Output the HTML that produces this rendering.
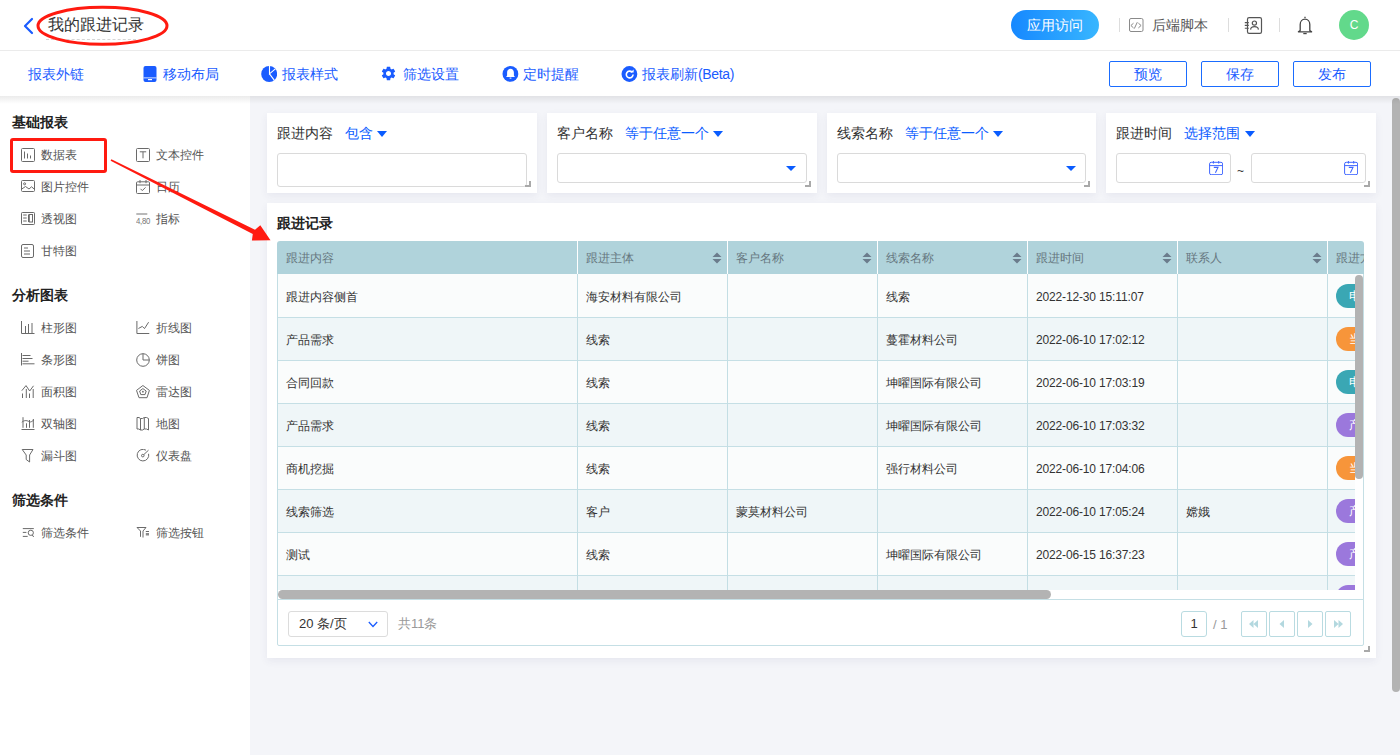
<!DOCTYPE html>
<html><head><meta charset="utf-8">
<style>
*{box-sizing:border-box;margin:0;padding:0}
html,body{width:1400px;height:755px;overflow:hidden}
body{background:#f4f5f9;font-family:"Liberation Sans",sans-serif;color:#333;position:relative}
.a{position:absolute}
.hdr{left:0;top:0;width:1400px;height:51px;background:#fff;border-bottom:1px solid #ebebeb}
.tb{left:0;top:51px;width:1400px;height:45px;background:#fff}
.tbi{top:66px;font-size:14px;line-height:16px;color:#1a5cff;white-space:nowrap}
.btn{top:61px;width:78px;height:26px;border:1px solid #1a6cff;border-radius:2px;font-size:14px;line-height:24px;text-align:center;color:#1a5cff}
.side{left:0;top:96px;width:250px;height:659px;background:#fff}
.sh{font-size:14px;font-weight:bold;color:#222;line-height:16px;left:12px}
.si{font-size:12px;color:#555;line-height:14px;white-space:nowrap}
.ic{width:13px;height:13px}
.card{background:#fff;box-shadow:0 3px 8px rgba(50,50,110,.07)}
.lbl{font-size:14px;line-height:16px;color:#333;white-space:nowrap}
.op{font-size:14px;line-height:16px;color:#0a5cff;white-space:nowrap}
.tri{width:0;height:0;border-left:5px solid transparent;border-right:5px solid transparent;border-top:6px solid #0a5cff}
.inp{border:1px solid #dadada;border-radius:3px;background:#fff}
.tri2{width:0;height:0;border-left:5px solid transparent;border-right:5px solid transparent;border-top:5px solid #0a5cff}
.hnd{width:6px;height:6px;border-right:2px solid #a9a9a9;border-bottom:2px solid #a9a9a9}
.th{top:241px;height:33px;background:#b0d3db;font-size:12px;line-height:33px;color:#76878d;padding-left:9px;white-space:nowrap;overflow:hidden}
.row{left:277px;width:1078px;height:43px;border-bottom:1px solid #c3dee4}
.td{font-size:12px;line-height:14px;color:#333;white-space:nowrap}
.vl{width:1px;background:#c3dee4}
.sort{width:10px;height:12px}
.tag{width:40px;height:24px;border-radius:12px;color:#fff;font-size:12px;line-height:24px;padding-left:13px}
.pb{top:611px;width:26px;height:26px;border:1px solid #b9dbe1;border-radius:2px}
</style></head><body>

<!-- header -->
<div class="a hdr"></div>
<svg class="a" style="left:22px;top:17px" width="14" height="18" viewBox="0 0 14 18"><path d="M10 2 L3 9 L10 16" fill="none" stroke="#1a5cff" stroke-width="2.2" stroke-linecap="round" stroke-linejoin="round"/></svg>
<div class="a" style="left:48px;top:16px;font-size:16px;line-height:18px;color:#333;white-space:nowrap">我的跟进记录</div>
<div class="a" style="left:46px;top:39px;width:90px;border-top:1px dashed #d6d6d6"></div>
<svg class="a" style="left:35px;top:4px" width="136" height="44" viewBox="0 0 136 44"><ellipse cx="67.5" cy="21.8" rx="64.5" ry="18.5" fill="none" stroke="#ff1a10" stroke-width="3"/></svg>

<div class="a" style="left:1011px;top:10px;width:88px;height:30px;border-radius:15px;background:linear-gradient(90deg,#1688ff,#38b6ff);color:#fff;font-size:14px;line-height:30px;text-align:center">应用访问</div>
<div class="a" style="left:1119px;top:18px;width:1px;height:14px;background:#ddd"></div>
<svg class="a" style="left:1129px;top:18px" width="15" height="14" viewBox="0 0 15 14"><rect x="0.5" y="0.5" width="13.5" height="13" rx="1.5" fill="none" stroke="#8a8a8a" stroke-width="1"/><path d="M4.5 5.2 L1.9 7.5 L4.5 9.9 M9.4 5.2 L12.1 7.5 L9.4 9.9 M8.3 4.2 L5.3 10.6" fill="none" stroke="#8a8a8a" stroke-width="1"/></svg>
<div class="a" style="left:1152px;top:17px;font-size:14px;line-height:16px;color:#555;white-space:nowrap">后端脚本</div>
<div class="a" style="left:1228px;top:18px;width:1px;height:14px;background:#ddd"></div>
<svg class="a" style="left:1244px;top:17px" width="19" height="17" viewBox="0 0 19 17"><rect x="3.5" y="0.6" width="14" height="15.8" rx="1.6" fill="none" stroke="#555" stroke-width="1.2"/><path d="M0.8 5.6h4M0.8 8.4h4M0.8 11.3h4" stroke="#555" stroke-width="1.1"/><circle cx="10.4" cy="6.1" r="2.1" fill="none" stroke="#555" stroke-width="1.2"/><path d="M6.6 12.6 C6.8 8.6 14.2 8.6 14.4 12.6" fill="none" stroke="#555" stroke-width="1.2"/></svg>
<div class="a" style="left:1279px;top:18px;width:1px;height:14px;background:#ddd"></div>
<svg class="a" style="left:1297px;top:16px" width="16" height="19" viewBox="0 0 16 19"><path d="M8 0.8v1.2" stroke="#444" stroke-width="1.3"/><path d="M3.2 14.5 V8.5 C3.2 5.3 5.3 3.2 8 3.2 C10.7 3.2 12.8 5.3 12.8 8.5 V14.5 L14.6 15.8 H1.4 Z" fill="none" stroke="#444" stroke-width="1.3" stroke-linejoin="round"/><path d="M6.3 17.6 H9.7" stroke="#444" stroke-width="1.2"/></svg>
<div class="a" style="left:1339px;top:10px;width:30px;height:30px;border-radius:15px;background:#62d98b;color:#fff;font-size:12px;line-height:31px;text-align:center">C</div>

<!-- toolbar -->
<div class="a tb"></div>
<div class="a tbi" style="left:28px">报表外链</div>
<svg class="a" style="left:143px;top:66px" width="14" height="16" viewBox="0 0 14 16"><rect x="0.5" y="0" width="13" height="16" rx="2" fill="#1a5cff"/><rect x="5" y="13" width="4" height="1.2" fill="#fff"/><rect x="0.5" y="11.5" width="13" height="0.8" fill="#fff"/></svg>
<div class="a tbi" style="left:163px">移动布局</div>
<svg class="a" style="left:261px;top:66px" width="16" height="16" viewBox="0 0 16 16"><circle cx="8.2" cy="8" r="8" fill="#1a5cff"/><path d="M8.5 0V7.9L14.6 2.6M8.5 7.9L13.4 14.4" fill="none" stroke="#fff" stroke-width="1.1"/></svg>
<div class="a tbi" style="left:282px">报表样式</div>
<svg class="a" style="left:380px;top:65px" width="17" height="17" viewBox="0 0 24 24"><path fill="#1a5cff" d="M19.14 12.94c.04-.3.06-.61.06-.94 0-.32-.02-.64-.07-.94l2.03-1.58a.49.49 0 0 0 .12-.61l-1.92-3.32a.488.488 0 0 0-.59-.22l-2.39.96c-.5-.38-1.03-.7-1.62-.94l-.36-2.54a.484.484 0 0 0-.48-.41h-3.84c-.24 0-.43.17-.47.41l-.36 2.54c-.59.24-1.13.57-1.62.94l-2.39-.96c-.22-.08-.47 0-.59.22L2.74 8.87c-.12.21-.08.47.12.61l2.03 1.58c-.05.3-.09.63-.09.94s.02.64.07.94l-2.03 1.58a.49.49 0 0 0-.12.61l1.92 3.32c.12.22.37.29.59.22l2.39-.96c.5.38 1.03.7 1.62.94l.36 2.54c.05.24.24.41.48.41h3.84c.24 0 .44-.17.47-.41l.36-2.54c.59-.24 1.13-.56 1.62-.94l2.39.96c.22.08.47 0 .59-.22l1.92-3.32c.12-.22.07-.47-.12-.61l-2.01-1.58zM12 15.6c-1.98 0-3.6-1.62-3.6-3.6s1.62-3.6 3.6-3.6 3.6 1.62 3.6 3.6-1.62 3.6-3.6 3.6z"/></svg>
<div class="a tbi" style="left:403px">筛选设置</div>
<svg class="a" style="left:502px;top:66px" width="17" height="16" viewBox="0 0 17 16"><circle cx="8.4" cy="7.9" r="7.9" fill="#1a5cff"/><path d="M4.1 11 H12.9 L11.9 9.6 V6.4 C11.9 4.3 10.3 2.7 8.5 2.7 C6.7 2.7 5.1 4.3 5.1 6.4 V9.6 Z" fill="#fff"/><rect x="7.6" y="11.6" width="1.8" height="1" fill="#fff"/></svg>
<div class="a tbi" style="left:523px">定时提醒</div>
<svg class="a" style="left:621px;top:66px" width="17" height="16" viewBox="0 0 17 16"><circle cx="8.4" cy="8" r="7.9" fill="#1a5cff"/><path d="M11.2 6.2 A3.4 3.4 0 1 0 12.1 8.6" fill="none" stroke="#fff" stroke-width="1.6"/><path d="M9.4 6.6 L12.6 3.6 L12.6 6.6 Z" fill="#fff"/></svg>
<div class="a tbi" style="left:642px">报表刷新<span style="letter-spacing:-0.35px">(Beta)</span></div>

<div class="a btn" style="left:1109px">预览</div>
<div class="a btn" style="left:1201px">保存</div>
<div class="a btn" style="left:1293px">发布</div>

<!-- sidebar -->
<div class="a side"></div>
<div class="a sh" style="top:114px">基础报表</div>
<div class="a sh" style="top:287px">分析图表</div>
<div class="a sh" style="top:492px">筛选条件</div>
<!--SIDE--><svg class="a" style="left:21px;top:148px" width="16" height="14" viewBox="0 0 16 14"><rect x="0.5" y="0.5" width="13" height="13" rx="1" stroke="#6a6a6a" stroke-width="1" fill="none"/><path d="M3.5 3.5v7M6.5 5.5v5M9.5 7.5v3" stroke="#6a6a6a" stroke-width="1" fill="none"/></svg>
<div class="a si" style="left:41px;top:148px">数据表</div>
<svg class="a" style="left:136px;top:148px" width="16" height="14" viewBox="0 0 16 14"><rect x="0.5" y="0.5" width="13" height="13" rx="1" stroke="#6a6a6a" stroke-width="1" fill="none"/><path d="M3.8 3.8h6.4M7 3.8v6.5" stroke="#6a6a6a" stroke-width="1" fill="none"/></svg>
<div class="a si" style="left:156px;top:148px">文本控件</div>
<svg class="a" style="left:21px;top:180px" width="16" height="14" viewBox="0 0 16 14"><rect x="0.5" y="0.5" width="13" height="11" rx="1" stroke="#6a6a6a" stroke-width="1" fill="none"/><circle cx="3.6" cy="3.8" r="1" stroke="#6a6a6a" stroke-width="1" fill="none"/><path d="M0.8 9 L4.5 6.5 L8 9 L10.5 6.8 L13.2 9" stroke="#6a6a6a" stroke-width="1" fill="none"/></svg>
<div class="a si" style="left:41px;top:180px">图片控件</div>
<svg class="a" style="left:136px;top:180px" width="16" height="14" viewBox="0 0 16 14"><rect x="0.5" y="1.8" width="13" height="11.7" rx="1" stroke="#6a6a6a" stroke-width="1" fill="none"/><path d="M0.5 5h13M4 0v3.2M10 0v3.2M4.5 8.8l1.8 1.8 3.2-3.2" stroke="#6a6a6a" stroke-width="1" fill="none"/></svg>
<div class="a si" style="left:156px;top:180px">日历</div>
<svg class="a" style="left:21px;top:212px" width="16" height="14" viewBox="0 0 16 14"><rect x="0.5" y="0.5" width="13" height="12" rx="0.8" stroke="#6a6a6a" stroke-width="1" fill="none"/><path d="M2.2 3h3.5M2.2 6h3.5M2.2 9h3.5M7.5 2.5v7.5" stroke="#6a6a6a" stroke-width="1" fill="none"/><rect x="8.3" y="2.5" width="3.2" height="7.5" stroke="#6a6a6a" stroke-width="1" fill="none"/></svg>
<div class="a si" style="left:41px;top:212px">透视图</div>
<svg class="a" style="left:136px;top:212px" width="16" height="14" viewBox="0 0 16 14"><path d="M0.3 2h11" stroke="#8a8a8a" stroke-width="1.2"/><text x="0" y="11.8" font-size="9.5" fill="#777" font-family="Liberation Sans" transform="scale(0.82,1)" letter-spacing="-0.3">4,80</text></svg>
<div class="a si" style="left:156px;top:212px">指标</div>
<svg class="a" style="left:21px;top:244px" width="16" height="14" viewBox="0 0 16 14"><rect x="0.5" y="0.5" width="12" height="13" rx="1.5" stroke="#6a6a6a" stroke-width="1" fill="none"/><path d="M3 4h4M3 7h6M3 10h6" stroke="#6a6a6a" stroke-width="1" fill="none"/></svg>
<div class="a si" style="left:41px;top:244px">甘特图</div>
<svg class="a" style="left:21px;top:321px" width="16" height="14" viewBox="0 0 16 14"><path d="M0.5 0v12.5h13M4.5 5v7M7.5 3v9M11 2v10" stroke="#6a6a6a" stroke-width="1" fill="none"/></svg>
<div class="a si" style="left:41px;top:321px">柱形图</div>
<svg class="a" style="left:136px;top:321px" width="16" height="14" viewBox="0 0 16 14"><path d="M0.9 0v12.5h12.4M2.4 7.5l3.9-2.1 2.2 2.2 4.1-6.4" stroke="#6a6a6a" stroke-width="1" fill="none"/></svg>
<div class="a si" style="left:156px;top:321px">折线图</div>
<svg class="a" style="left:21px;top:353px" width="16" height="14" viewBox="0 0 16 14"><path d="M0.5 0v12.5M1.5 2.5h8M1.5 5.5h10M1.5 8.2h6M1.5 10.8h12" stroke="#6a6a6a" stroke-width="1" fill="none"/></svg>
<div class="a si" style="left:41px;top:353px">条形图</div>
<svg class="a" style="left:136px;top:353px" width="16" height="14" viewBox="0 0 16 14"><circle cx="7" cy="7" r="6.3" stroke="#6a6a6a" stroke-width="1" fill="none"/><path d="M7 0.7V7H13.3" stroke="#6a6a6a" stroke-width="1" fill="none"/></svg>
<div class="a si" style="left:156px;top:353px">饼图</div>
<svg class="a" style="left:21px;top:385px" width="16" height="14" viewBox="0 0 16 14"><path d="M0.8 5.7L5 0.6 8.7 6 12.5 0.8M1.5 8.5V13M5.3 4V13M8.5 8.5V13M12.2 4V13" stroke="#6a6a6a" stroke-width="1" fill="none"/></svg>
<div class="a si" style="left:41px;top:385px">面积图</div>
<svg class="a" style="left:136px;top:385px" width="16" height="14" viewBox="0 0 16 14"><path d="M6.9 0.5L13.4 5.4 11 12.7H3L0.5 5.4Z" stroke="#6a6a6a" stroke-width="1" fill="none"/><path d="M6.9 3.6L10.2 6 9 9.6H4.8L3.6 6Z" stroke="#6a6a6a" stroke-width="1" fill="none"/><circle cx="6.9" cy="6.7" r="0.9" fill="#6a6a6a"/></svg>
<div class="a si" style="left:156px;top:385px">雷达图</div>
<svg class="a" style="left:21px;top:417px" width="16" height="14" viewBox="0 0 16 14"><path d="M0.5 12.5h13M2 0.2v10.6M5.5 6.3v4.5M8.5 3v7.8M12.3 2v8.8M0.8 5.2C3 3.5 5 2.8 8.5 4.8 10 5.5 11.5 4 13 2.8" stroke="#6a6a6a" stroke-width="1" fill="none"/></svg>
<div class="a si" style="left:41px;top:417px">双轴图</div>
<svg class="a" style="left:136px;top:417px" width="16" height="14" viewBox="0 0 16 14"><path d="M1 0.5H3L4.5 1.5H6.5L8.3 0.5H10.5L12.5 1.5V13L10.5 12H8.3L6.5 13H4.5L2.8 12H1Z M4.5 1.5V13 M8.3 0.5V12" stroke="#6a6a6a" stroke-width="1" fill="none"/></svg>
<div class="a si" style="left:156px;top:417px">地图</div>
<svg class="a" style="left:21px;top:449px" width="16" height="14" viewBox="0 0 16 14"><path d="M1.2 0.5H12L8.6 6V13L5.2 10.5V6Z" stroke="#6a6a6a" stroke-width="1" fill="none"/></svg>
<div class="a si" style="left:41px;top:449px">漏斗图</div>
<svg class="a" style="left:136px;top:449px" width="16" height="14" viewBox="0 0 16 14"><path d="M10 1.2A5.8 5.8 0 1 0 12.6 4.8" stroke="#6a6a6a" stroke-width="1" fill="none"/><circle cx="6.8" cy="6.6" r="1.3" stroke="#6a6a6a" stroke-width="1" fill="none"/><path d="M7.8 5.6L12.5 1.2" stroke="#6a6a6a" stroke-width="1" fill="none"/></svg>
<div class="a si" style="left:156px;top:449px">仪表盘</div>
<svg class="a" style="left:21px;top:526px" width="16" height="14" viewBox="0 0 16 14"><path d="M1.8 2.6h11M1.8 6.4h3.6M1.8 10.4h4.9" stroke="#6a6a6a" stroke-width="1" fill="none"/><circle cx="9.8" cy="6.8" r="2.6" stroke="#6a6a6a" stroke-width="1" fill="none"/><path d="M11.3 9l1.4 2" stroke="#6a6a6a" stroke-width="1" fill="none"/></svg>
<div class="a si" style="left:41px;top:526px">筛选条件</div>
<svg class="a" style="left:136px;top:526px" width="16" height="14" viewBox="0 0 16 14"><path d="M4.5 10.8V5L1 1.5H10L7 5V11.5" stroke="#6a6a6a" stroke-width="1" fill="none"/><path d="M9.8 5.5h3.2" stroke="#6a6a6a" stroke-width="1" fill="none"/><rect x="9.8" y="7" width="3.2" height="2.5" fill="#8a8a8a"/></svg>
<div class="a si" style="left:156px;top:526px">筛选按钮</div><!--/SIDE-->

<!-- annotations -->
<div class="a" style="left:10px;top:138px;width:97px;height:35px;border:3px solid #ff1a10;border-radius:3px"></div>
<svg class="a" style="left:100px;top:150px;z-index:5" width="180" height="100" viewBox="100 150 180 100"><path d="M110.6 160.7 L111.4 159.3 L255.0 229.7 L260.3 225.3 L270.5 240.3 L251.9 240.6 L252.8 234.1 Z" fill="#ff1a10"/></svg>

<!-- toolbar shadow -->
<div class="a" style="left:0;top:96px;width:1400px;height:8px;background:linear-gradient(rgba(0,0,0,.08),rgba(0,0,0,0));z-index:4"></div>

<!-- page scrollbar -->
<div class="a" style="left:1392px;top:98px;width:8px;height:594px;border-radius:4px;background:#b3b3b3"></div>

<!-- filter cards -->
<div class="a card" style="left:267px;top:113px;width:270px;height:80px"></div>
<div class="a card" style="left:547px;top:113px;width:270px;height:80px"></div>
<div class="a card" style="left:827px;top:113px;width:269px;height:80px"></div>
<div class="a card" style="left:1106px;top:113px;width:270px;height:80px"></div>

<div class="a lbl" style="left:277px;top:125px">跟进内容</div>
<div class="a op" style="left:345px;top:125px">包含</div>
<div class="a tri" style="left:377px;top:131px"></div>
<div class="a inp" style="left:277px;top:153px;width:250px;height:34px"></div>
<div class="a hnd" style="left:525px;top:181px"></div>

<div class="a lbl" style="left:557px;top:125px">客户名称</div>
<div class="a op" style="left:625px;top:125px">等于任意一个</div>
<div class="a tri" style="left:713px;top:131px"></div>
<div class="a inp" style="left:557px;top:153px;width:250px;height:30px"></div>
<div class="a tri2" style="left:786px;top:166px"></div>
<div class="a hnd" style="left:805px;top:181px"></div>

<div class="a lbl" style="left:837px;top:125px">线索名称</div>
<div class="a op" style="left:905px;top:125px">等于任意一个</div>
<div class="a tri" style="left:993px;top:131px"></div>
<div class="a inp" style="left:837px;top:153px;width:249px;height:30px"></div>
<div class="a tri2" style="left:1066px;top:166px"></div>
<div class="a hnd" style="left:1084px;top:181px"></div>

<div class="a lbl" style="left:1116px;top:125px">跟进时间</div>
<div class="a op" style="left:1184px;top:125px">选择范围</div>
<div class="a tri" style="left:1245px;top:131px"></div>
<div class="a inp" style="left:1116px;top:153px;width:115px;height:30px"></div>
<svg class="a" style="left:1209px;top:161px" width="14" height="14" viewBox="0 0 14 14"><rect x="0.6" y="1.3" width="13" height="12.4" rx="1.6" fill="none" stroke="#3f66ff" stroke-width="1"/><path d="M0.6 4.6H13.6M4.4 0V2.6M9.7 0V2.6" stroke="#3f66ff" stroke-width="1"/><path d="M4.8 6.4H9L6.4 11.8" fill="none" stroke="#3f66ff" stroke-width="1.1"/></svg>
<div class="a" style="left:1237px;top:164px;font-size:12px;color:#333">~</div>
<div class="a inp" style="left:1251px;top:153px;width:115px;height:30px"></div>
<svg class="a" style="left:1344px;top:161px" width="14" height="14" viewBox="0 0 14 14"><rect x="0.6" y="1.3" width="13" height="12.4" rx="1.6" fill="none" stroke="#3f66ff" stroke-width="1"/><path d="M0.6 4.6H13.6M4.4 0V2.6M9.7 0V2.6" stroke="#3f66ff" stroke-width="1"/><path d="M4.8 6.4H9L6.4 11.8" fill="none" stroke="#3f66ff" stroke-width="1.1"/></svg>
<div class="a hnd" style="left:1364px;top:181px"></div>

<!-- main card -->
<div class="a card" style="left:267px;top:203px;width:1109px;height:455px"></div>
<div class="a" style="left:277px;top:215px;font-size:14px;font-weight:bold;line-height:16px;color:#222">跟进记录</div>

<!--TABLE--><div class="a" style="left:277px;top:274px;width:1078px;height:316px;overflow:hidden;background:#fafcfc">
<div class="a" style="left:0;top:1px;width:1200px;height:43px;background:#fafcfc;border-bottom:1px solid #c5dfe5"></div>
<div class="a td" style="left:9px;top:16px">跟进内容侧首</div>
<div class="a td" style="left:309px;top:16px">海安材料有限公司</div>
<div class="a td" style="left:609px;top:16px">线索</div>
<div class="a td" style="left:759px;top:16px;letter-spacing:-0.15px">2022-12-30 15:11:07</div>
<div class="a tag" style="left:1059px;top:10px;background:#3aa7b4">电话</div>
<div class="a" style="left:0;top:44px;width:1200px;height:43px;background:#eff6f8;border-bottom:1px solid #c5dfe5"></div>
<div class="a td" style="left:9px;top:59px">产品需求</div>
<div class="a td" style="left:309px;top:59px">线索</div>
<div class="a td" style="left:609px;top:59px">蔓霍材料公司</div>
<div class="a td" style="left:759px;top:59px;letter-spacing:-0.15px">2022-06-10 17:02:12</div>
<div class="a tag" style="left:1059px;top:53px;background:#f7953a">当面</div>
<div class="a" style="left:0;top:87px;width:1200px;height:43px;background:#fafcfc;border-bottom:1px solid #c5dfe5"></div>
<div class="a td" style="left:9px;top:102px">合同回款</div>
<div class="a td" style="left:309px;top:102px">线索</div>
<div class="a td" style="left:609px;top:102px">坤曜国际有限公司</div>
<div class="a td" style="left:759px;top:102px;letter-spacing:-0.15px">2022-06-10 17:03:19</div>
<div class="a tag" style="left:1059px;top:96px;background:#3aa7b4">电话</div>
<div class="a" style="left:0;top:130px;width:1200px;height:43px;background:#eff6f8;border-bottom:1px solid #c5dfe5"></div>
<div class="a td" style="left:9px;top:145px">产品需求</div>
<div class="a td" style="left:309px;top:145px">线索</div>
<div class="a td" style="left:609px;top:145px">坤曜国际有限公司</div>
<div class="a td" style="left:759px;top:145px;letter-spacing:-0.15px">2022-06-10 17:03:32</div>
<div class="a tag" style="left:1059px;top:139px;background:#9b78dc">产品</div>
<div class="a" style="left:0;top:173px;width:1200px;height:43px;background:#fafcfc;border-bottom:1px solid #c5dfe5"></div>
<div class="a td" style="left:9px;top:188px">商机挖掘</div>
<div class="a td" style="left:309px;top:188px">线索</div>
<div class="a td" style="left:609px;top:188px">强行材料公司</div>
<div class="a td" style="left:759px;top:188px;letter-spacing:-0.15px">2022-06-10 17:04:06</div>
<div class="a tag" style="left:1059px;top:182px;background:#f7953a">当面</div>
<div class="a" style="left:0;top:216px;width:1200px;height:43px;background:#eff6f8;border-bottom:1px solid #c5dfe5"></div>
<div class="a td" style="left:9px;top:231px">线索筛选</div>
<div class="a td" style="left:309px;top:231px">客户</div>
<div class="a td" style="left:459px;top:231px">蒙莫材料公司</div>
<div class="a td" style="left:759px;top:231px;letter-spacing:-0.15px">2022-06-10 17:05:24</div>
<div class="a td" style="left:909px;top:231px">嫦娥</div>
<div class="a tag" style="left:1059px;top:225px;background:#9b78dc">产品</div>
<div class="a" style="left:0;top:259px;width:1200px;height:43px;background:#fafcfc;border-bottom:1px solid #c5dfe5"></div>
<div class="a td" style="left:9px;top:274px">测试</div>
<div class="a td" style="left:309px;top:274px">线索</div>
<div class="a td" style="left:609px;top:274px">坤曜国际有限公司</div>
<div class="a td" style="left:759px;top:274px;letter-spacing:-0.15px">2022-06-15 16:37:23</div>
<div class="a tag" style="left:1059px;top:268px;background:#9b78dc">产品</div>
<div class="a" style="left:0;top:302px;width:1200px;height:43px;background:#eff6f8;border-bottom:1px solid #c5dfe5"></div>
<div class="a tag" style="left:1059px;top:311px;background:#9b78dc">产品</div>
<div class="a vl" style="left:0px;top:0;height:316px"></div>
<div class="a vl" style="left:300px;top:0;height:316px"></div>
<div class="a vl" style="left:450px;top:0;height:316px"></div>
<div class="a vl" style="left:600px;top:0;height:316px"></div>
<div class="a vl" style="left:750px;top:0;height:316px"></div>
<div class="a vl" style="left:900px;top:0;height:316px"></div>
<div class="a vl" style="left:1050px;top:0;height:316px"></div>
</div>
<div class="a" style="left:277px;top:241px;width:1087px;height:33px;background:#b0d3db;border-radius:3px 3px 0 0;overflow:hidden">
<div class="a" style="left:9px;top:0;font-size:12px;line-height:33px;padding-top:1px;color:#66777f;white-space:nowrap">跟进内容</div>
<div class="a" style="left:309px;top:0;font-size:12px;line-height:33px;padding-top:1px;color:#66777f;white-space:nowrap">跟进主体</div>
<div class="a" style="left:300px;top:0;width:1px;height:33px;background:#fff"></div>
<svg class="a" style="left:435px;top:11px" width="10" height="12" viewBox="0 0 10 12"><path d="M5 0.5L9.5 5H0.5Z M5 11.5L9.5 7H0.5Z" fill="#6b7c8c"/></svg>
<div class="a" style="left:459px;top:0;font-size:12px;line-height:33px;padding-top:1px;color:#66777f;white-space:nowrap">客户名称</div>
<div class="a" style="left:450px;top:0;width:1px;height:33px;background:#fff"></div>
<svg class="a" style="left:585px;top:11px" width="10" height="12" viewBox="0 0 10 12"><path d="M5 0.5L9.5 5H0.5Z M5 11.5L9.5 7H0.5Z" fill="#6b7c8c"/></svg>
<div class="a" style="left:609px;top:0;font-size:12px;line-height:33px;padding-top:1px;color:#66777f;white-space:nowrap">线索名称</div>
<div class="a" style="left:600px;top:0;width:1px;height:33px;background:#fff"></div>
<svg class="a" style="left:735px;top:11px" width="10" height="12" viewBox="0 0 10 12"><path d="M5 0.5L9.5 5H0.5Z M5 11.5L9.5 7H0.5Z" fill="#6b7c8c"/></svg>
<div class="a" style="left:759px;top:0;font-size:12px;line-height:33px;padding-top:1px;color:#66777f;white-space:nowrap">跟进时间</div>
<div class="a" style="left:750px;top:0;width:1px;height:33px;background:#fff"></div>
<svg class="a" style="left:885px;top:11px" width="10" height="12" viewBox="0 0 10 12"><path d="M5 0.5L9.5 5H0.5Z M5 11.5L9.5 7H0.5Z" fill="#6b7c8c"/></svg>
<div class="a" style="left:909px;top:0;font-size:12px;line-height:33px;padding-top:1px;color:#66777f;white-space:nowrap">联系人</div>
<div class="a" style="left:900px;top:0;width:1px;height:33px;background:#fff"></div>
<svg class="a" style="left:1035px;top:11px" width="10" height="12" viewBox="0 0 10 12"><path d="M5 0.5L9.5 5H0.5Z M5 11.5L9.5 7H0.5Z" fill="#6b7c8c"/></svg>
<div class="a" style="left:1059px;top:0;font-size:12px;line-height:33px;padding-top:1px;color:#66777f;white-space:nowrap">跟进方式</div>
<div class="a" style="left:1050px;top:0;width:1px;height:33px;background:#fff"></div>
</div>
<div class="a" style="left:1355px;top:274px;width:9px;height:316px;background:#fff;border-right:1px solid #c5dfe5"></div>
<div class="a" style="left:1355px;top:275px;width:8px;height:204px;border-radius:4px;background:#b3b3b3"></div>
<div class="a" style="left:277px;top:590px;width:1087px;height:10px;background:#fff;border-left:1px solid #c5dfe5;border-right:1px solid #c5dfe5"></div>
<div class="a" style="left:278px;top:590px;width:773px;height:9px;border-radius:4.5px;background:#b3b3b3"></div>
<div class="a" style="left:277px;top:599px;width:1087px;height:47px;border:1px solid #c5dfe5;border-radius:0 0 2px 2px;background:#fff"></div>
<div class="a" style="left:288px;top:611px;width:100px;height:26px;border:1px solid #dcdcdc;border-radius:3px;background:#fff"></div>
<div class="a" style="left:299px;top:616px;font-size:13px;line-height:15px;color:#333;white-space:nowrap">20 条/页</div>
<svg class="a" style="left:368px;top:621px" width="10" height="7" viewBox="0 0 10 7"><path d="M0.8 1L5 5.5 9.2 1" fill="none" stroke="#1a5cff" stroke-width="1.3"/></svg>
<div class="a" style="left:398px;top:616px;font-size:13px;line-height:15px;color:#999;white-space:nowrap">共11条</div>
<div class="a" style="left:1181px;top:611px;width:26px;height:26px;border:1px solid #b9dbe1;border-radius:3px;font-size:13px;line-height:24px;text-align:center;color:#333">1</div>
<div class="a" style="left:1213px;top:617px;font-size:13px;line-height:15px;color:#999;white-space:nowrap">/ 1</div>
<div class="a pb" style="left:1241px"></div>
<svg class="a" style="left:1246px;top:616px" width="16" height="16" viewBox="0 0 16 16"><path d="M3 8L7.5 4V12Z M7.5 8L12 4V12Z" fill="#b3d8df"/></svg>
<div class="a pb" style="left:1269px"></div>
<svg class="a" style="left:1274px;top:616px" width="16" height="16" viewBox="0 0 16 16"><path d="M5.5 8L10 4V12Z" fill="#b3d8df"/></svg>
<div class="a pb" style="left:1297px"></div>
<svg class="a" style="left:1302px;top:616px" width="16" height="16" viewBox="0 0 16 16"><path d="M10.5 8L6 4V12Z" fill="#b3d8df"/></svg>
<div class="a pb" style="left:1325px"></div>
<svg class="a" style="left:1330px;top:616px" width="16" height="16" viewBox="0 0 16 16"><path d="M13 8L8.5 4V12Z M8.5 8L4 4V12Z" fill="#b3d8df"/></svg>
<div class="a hnd" style="left:1364px;top:646px"></div><!--/TABLE-->

</body></html>
